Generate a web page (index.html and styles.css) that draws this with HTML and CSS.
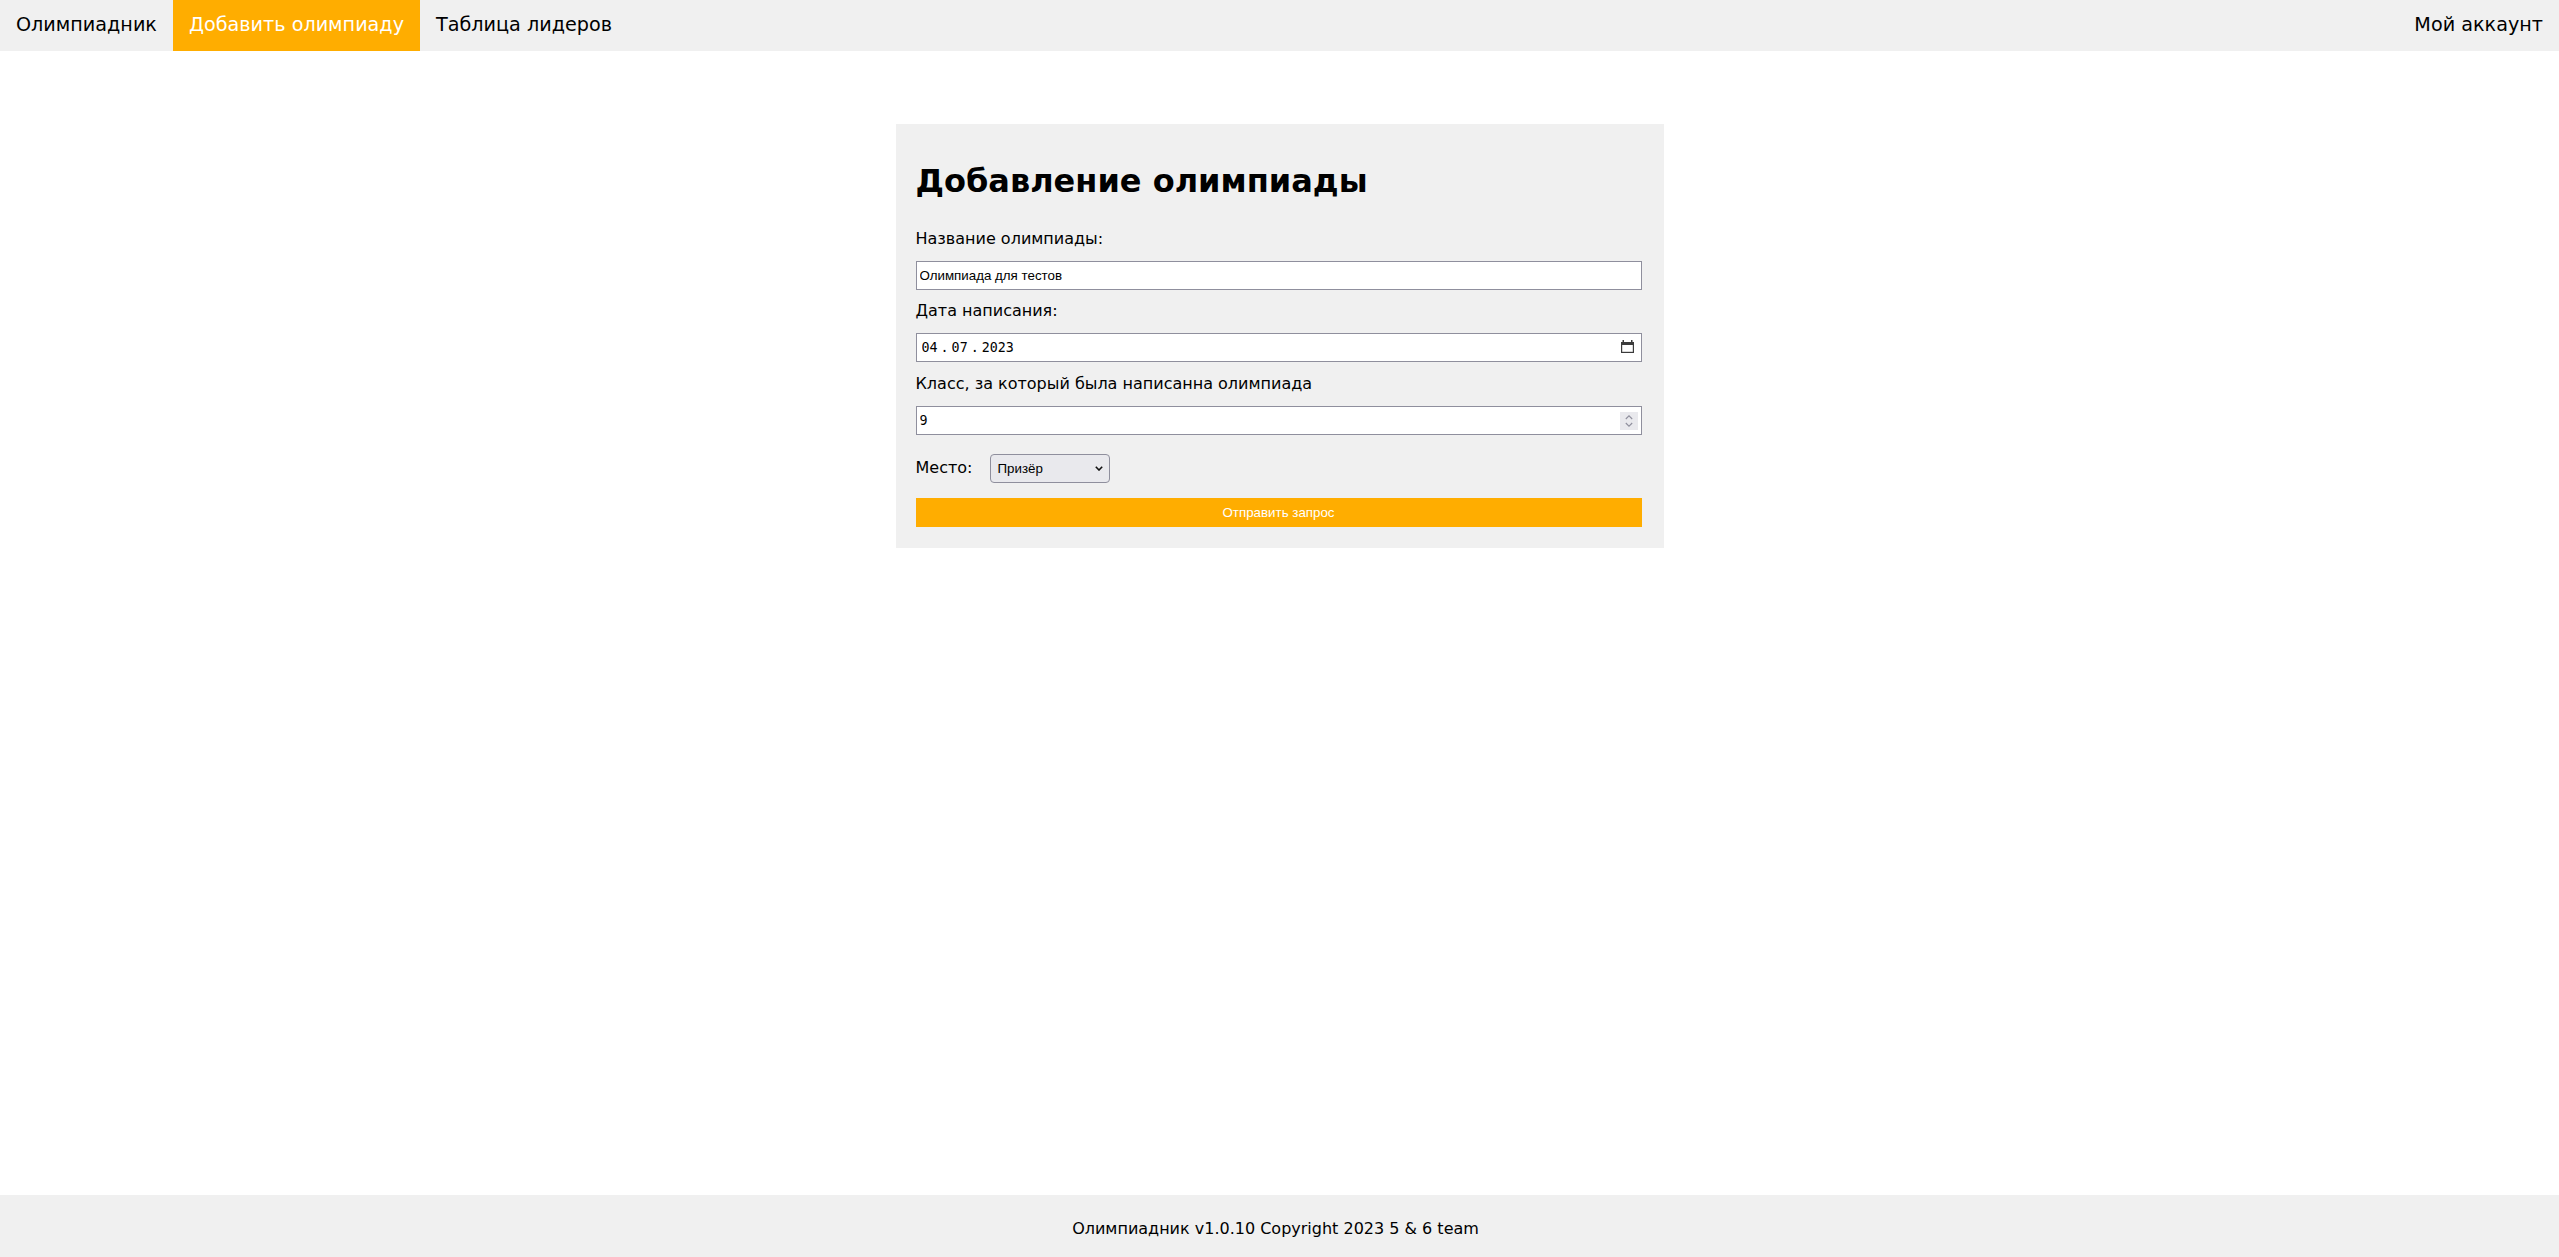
FILE: index.html
```html
<!DOCTYPE html>
<html lang="ru">
<head>
<meta charset="utf-8">
<title>Олимпиадник</title>
<link rel="stylesheet" href="styles.css">
</head>
<body>
<nav class="topnav">
  <a class="nav-item" href="#">Олимпиадник</a>
  <a class="nav-item active" href="#">Добавить олимпиаду</a>
  <a class="nav-item" href="#">Таблица лидеров</a>
  <a class="nav-item nav-right" href="#">Мой аккаунт</a>
</nav>
<main class="main">
  <form class="card">
    <h1 class="card-title">Добавление олимпиады</h1>
    <label class="field-label" for="name">Название олимпиады:</label>
    <div class="input-wrap">
      <input class="field-input" id="name" type="text" value="Олимпиада для тестов">
    </div>
    <label class="field-label" for="date">Дата написания:</label>
    <div class="input-wrap">
      <input class="field-input mono date" id="date" type="text" value="04 . 07 . 2023">
      <svg class="calendar-icon" width="13" height="13" viewBox="0 0 13 13"><rect x="0" y="2" width="13" height="3" fill="#3b3b3b"/><rect x="0.6" y="3" width="11.8" height="9.4" fill="none" stroke="#3b3b3b" stroke-width="1.2"/><rect x="1.5" y="0" width="1.5" height="3" fill="#3b3b3b"/><rect x="10" y="0" width="1.5" height="3" fill="#3b3b3b"/></svg>
    </div>
    <label class="field-label" for="grade">Класс, за который была написанна олимпиада</label>
    <div class="input-wrap">
      <input class="field-input mono" id="grade" type="text" value="9">
      <span class="spinner"><svg width="10" height="16" viewBox="0 0 10 16"><path d="M1.8 6 L5 2.8 L8.2 6" fill="none" stroke="#8f8f9d" stroke-width="1.1"/><path d="M1.8 10 L5 13.2 L8.2 10" fill="none" stroke="#8f8f9d" stroke-width="1.1"/></svg></span>
    </div>
    <div class="place-row">
      <label class="field-label inline" for="place">Место:</label>
      <div class="select-wrap">
        <select class="place-select" id="place">
          <option>Призёр</option>
          <option>Победитель</option>
          <option>Участник</option>
        </select>
        <svg class="select-arrow" width="8" height="5" viewBox="0 0 8 5"><path d="M0.8 0.8 L4 4 L7.2 0.8" fill="none" stroke="#111" stroke-width="1.6"/></svg>
      </div>
    </div>
    <button class="submit" type="button">Отправить запрос</button>
  </form>
</main>
<footer class="footer">Олимпиадник v1.0.10 Copyright 2023 5 &amp; 6 team</footer>
</body>
</html>
```

FILE: styles.css
```css
* { box-sizing: border-box; }
html, body { margin: 0; padding: 0; }
body {
  font-family: "DejaVu Sans", sans-serif;
  color: #000;
  background: #fff;
  min-height: 100vh;
  display: flex;
  flex-direction: column;
}
.topnav {
  display: flex;
  background: #f0f0f0;
  height: 51px;
}
.nav-item {
  display: block;
  padding: 12.5px 16px 15.5px;
  font-size: 19.2px;
  line-height: 23px;
  color: #000;
  text-decoration: none;
}
.nav-item.active {
  background: #ffad00;
  color: #fff;
}
.nav-right {
  margin-left: auto;
}
.main {
  flex: 1;
  display: flex;
  justify-content: center;
  align-items: flex-start;
  padding-top: 73px;
}
.card {
  width: 768px;
  background: #f0f0f0;
  padding: 17px 22px 20.7px 20px;
  display: flex;
  flex-direction: column;
}
.card-title {
  font-size: 32px;
  font-weight: bold;
  line-height: 37px;
  margin: 22px 0 29.5px;
}
.field-label {
  display: block;
  font-size: 16px;
  line-height: 18.67px;
}
.field-label.inline { display: inline-block; }
.input-wrap {
  position: relative;
  margin: 12.5px 0;
}
.field-input {
  display: block;
  width: 100%;
  height: 29px;
  margin: 0;
  padding: 0 3px;
  border: 1px solid #8f8f9d;
  border-radius: 0;
  background: #fff;
  font-family: "Liberation Sans", Arial, sans-serif;
  font-size: 13.33px;
  color: #000;
  outline: none;
}
.field-input.mono {
  font-family: "DejaVu Sans Mono", monospace;
}
.field-input.date {
  padding-left: 5px;
  word-spacing: -5px;
}
.calendar-icon {
  position: absolute;
  right: 8px;
  top: 7px;
}
.spinner {
  position: absolute;
  right: 4px;
  top: 5.5px;
  width: 18px;
  height: 18px;
  background: #e9e9ed;
  display: flex;
  align-items: center;
  justify-content: center;
}
.place-row {
  display: flex;
  align-items: center;
  gap: 18px;
  margin: 6.4px 0 15px;
}
.select-wrap {
  position: relative;
  display: flex;
}
.place-select {
  appearance: none;
  -webkit-appearance: none;
  width: 119.5px;
  height: 29.3px;
  padding: 0 6px;
  border: 1px solid #8f8f9d;
  border-radius: 4px;
  background: #e9e9ed;
  font-family: "Liberation Sans", Arial, sans-serif;
  font-size: 13.33px;
  color: #000;
}
.select-arrow {
  position: absolute;
  right: 7px;
  top: 12.5px;
  pointer-events: none;
}
.submit {
  display: block;
  width: 100%;
  height: 29px;
  border: none;
  background: #ffad00;
  color: #fff;
  font-family: "Liberation Sans", Arial, sans-serif;
  font-size: 13.33px;
  padding: 0;
}
.footer {
  background: #f0f0f0;
  height: 62px;
  padding: 24px 8px 0 0;
  text-align: center;
  font-size: 16px;
  line-height: 19px;
}
```
